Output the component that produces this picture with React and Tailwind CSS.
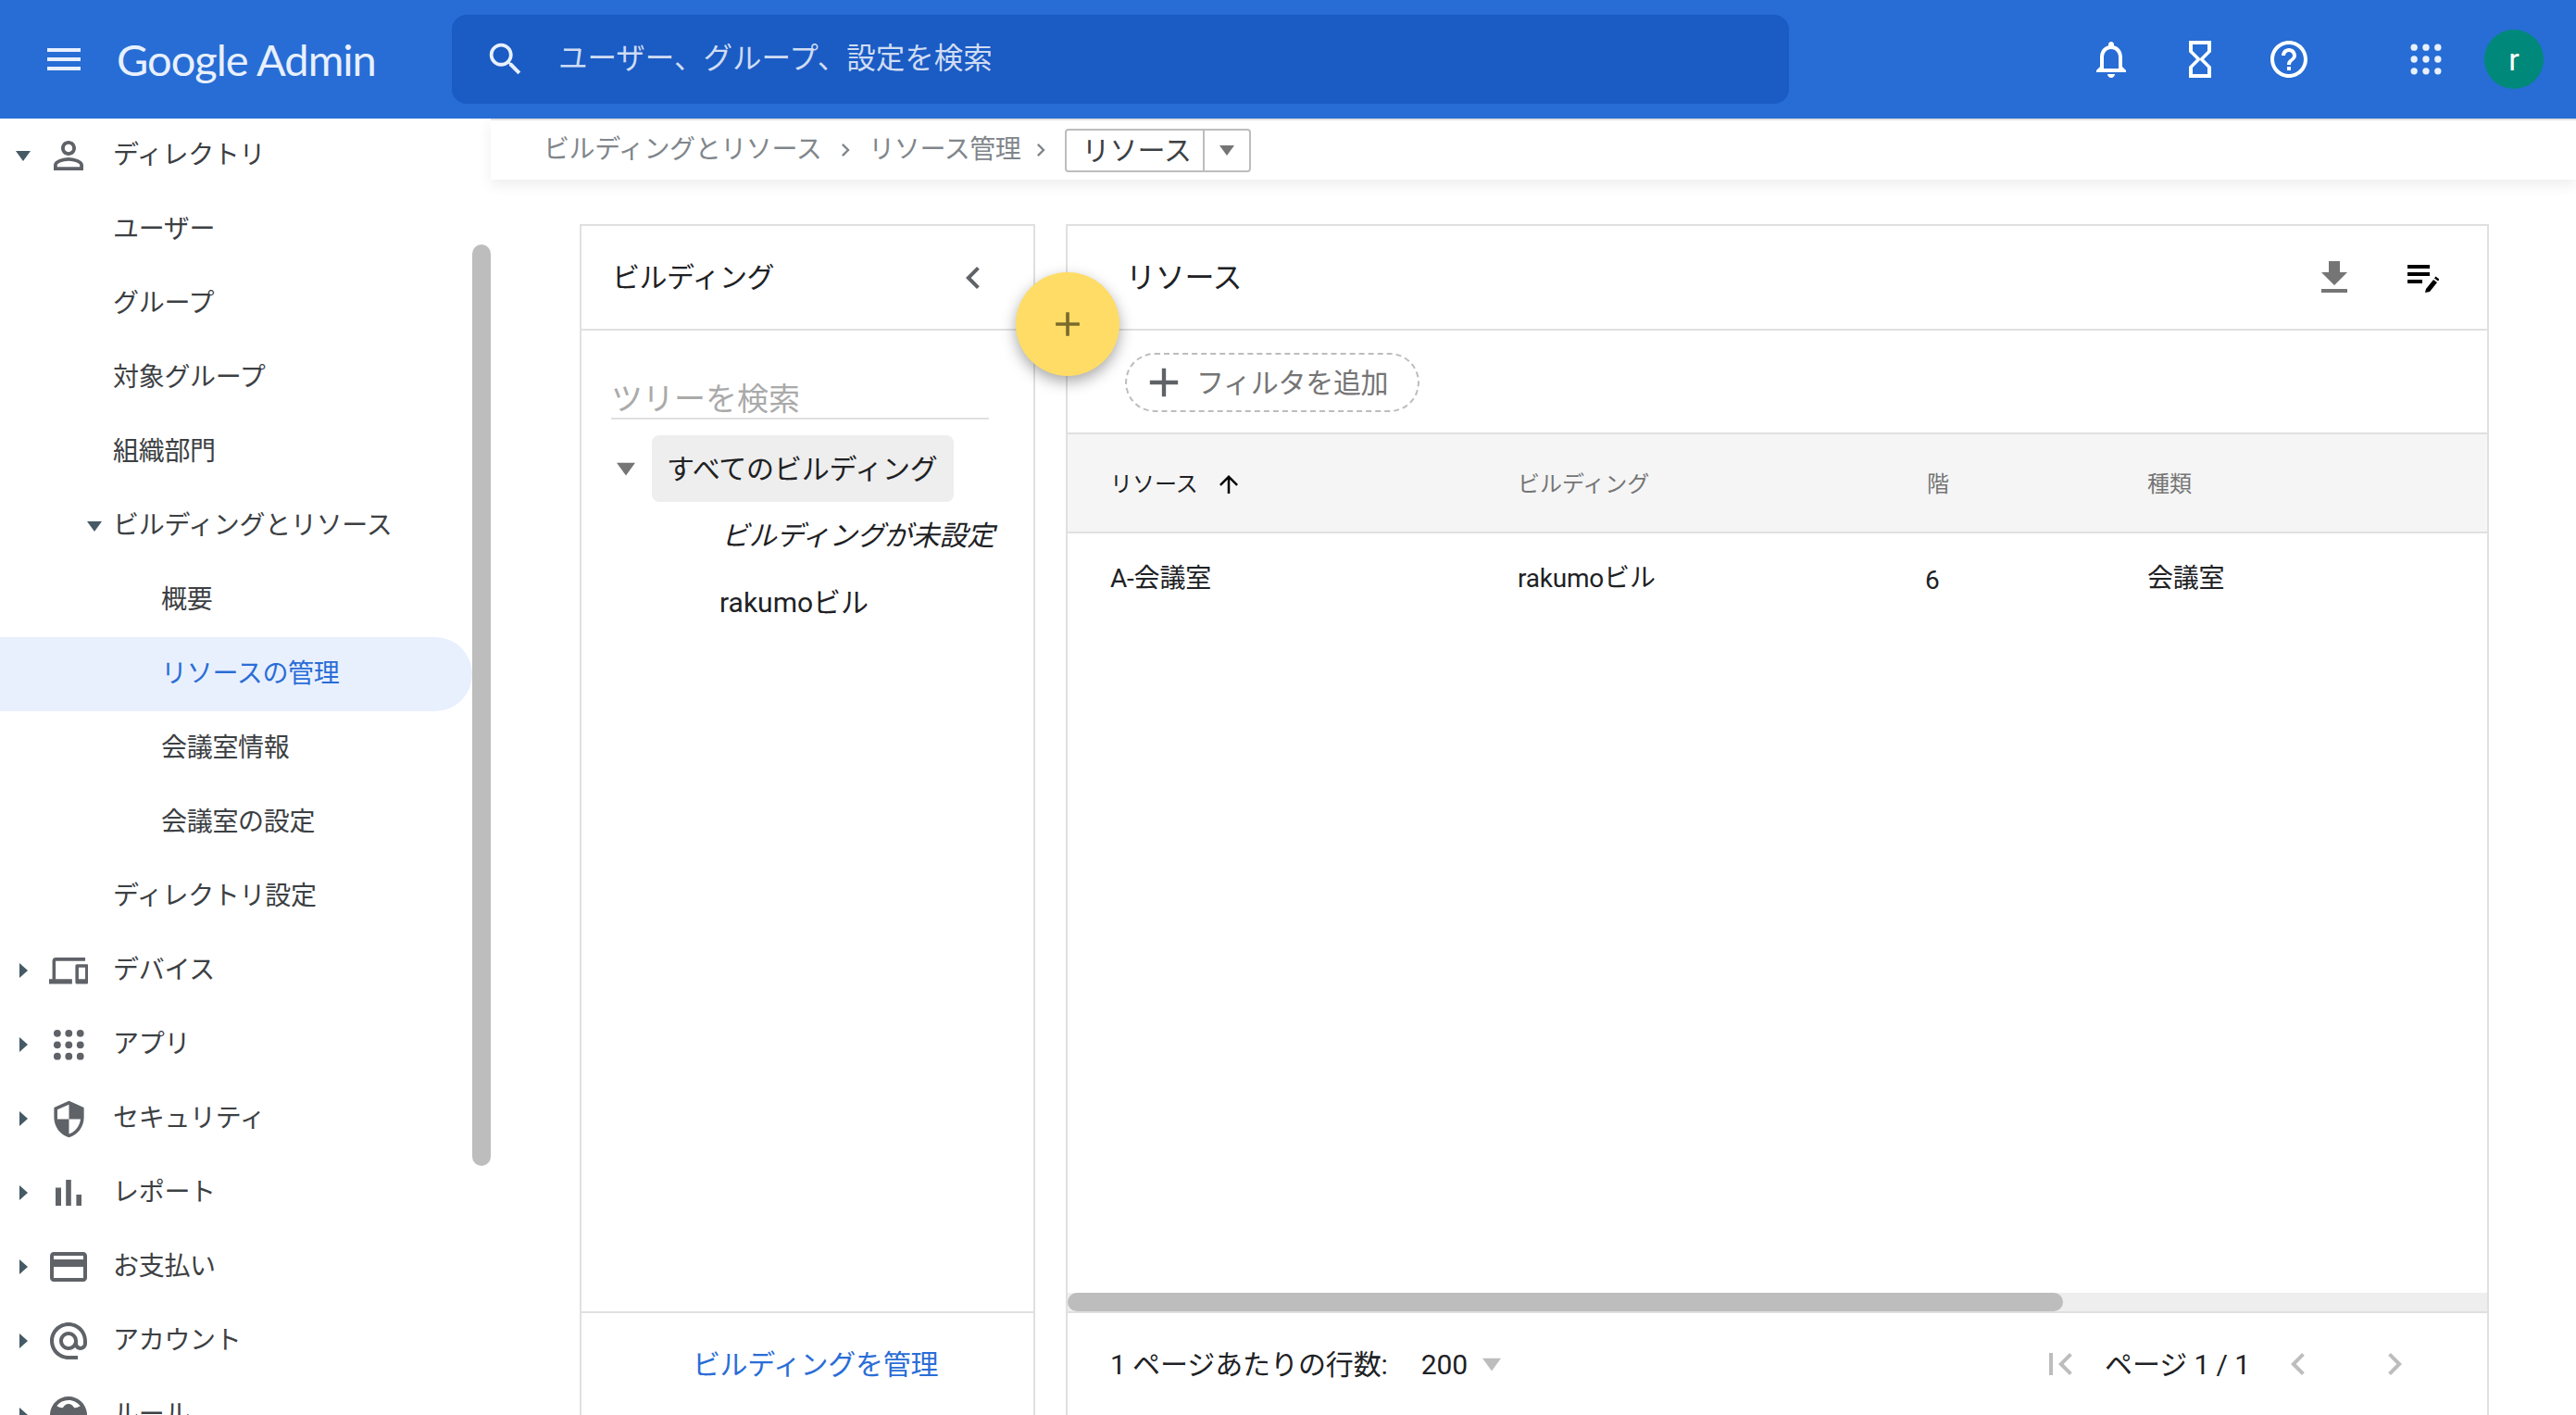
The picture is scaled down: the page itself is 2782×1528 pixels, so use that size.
const P = {
  person: "M12 5.9c1.16 0 2.1.94 2.1 2.1s-.94 2.1-2.1 2.1S9.9 9.16 9.9 8s.94-2.1 2.1-2.1m0 9c2.97 0 6.1 1.46 6.1 2.1v1.1H5.9V17c0-.64 3.13-2.1 6.1-2.1M12 4C9.79 4 8 5.79 8 8s1.79 4 4 4 4-1.79 4-4-1.79-4-4-4zm0 9c-2.67 0-8 1.34-8 4v3h16v-3c0-2.66-5.33-4-8-4z",
  devices: "M4 6h18V4H4c-1.1 0-2 .9-2 2v11H0v3h14v-3H4V6zm19 2h-6c-.55 0-1 .45-1 1v10c0 .55.45 1 1 1h6c.55 0 1-.45 1-1V9c0-.55-.45-1-1-1zm-1 9h-4v-7h4v7z",
  shield: "M12 1L3 5v6c0 5.55 3.84 10.74 9 12 5.16-1.26 9-6.45 9-12V5l-9-4zm0 10.99h7c-.53 4.12-3.28 7.79-7 8.94V12H5V6.3l7-3.11v8.8z",
  bars: "M5 9.2h3V19H5zM10.6 5h2.8v14h-2.8zm5.6 8H19v6h-2.8z",
  card: "M20 4H4c-1.11 0-1.99.89-1.99 2L2 18c0 1.11.89 2 2 2h16c1.11 0 2-.89 2-2V6c0-1.11-.89-2-2-2zm0 14H4v-6h16v6zm0-10H4V6h16v2z",
  at: "M12 2C6.48 2 2 6.48 2 12s4.48 10 10 10h5v-2h-5c-4.34 0-8-3.66-8-8s3.66-8 8-8 8 3.66 8 8v1.43c0 .79-.71 1.57-1.5 1.57s-1.5-.78-1.5-1.57V12c0-2.76-2.24-5-5-5s-5 2.24-5 5 2.24 5 5 5c1.38 0 2.64-.56 3.54-1.47.65.89 1.77 1.47 2.96 1.47 1.97 0 3.5-1.6 3.5-3.57V12c0-5.52-4.48-10-10-10zm0 13c-1.66 0-3-1.34-3-3s1.34-3 3-3 3 1.34 3 3-1.34 3-3 3z",
  rule: "M12 2C6.48 2 2 6.48 2 12s4.48 10 10 10 10-4.48 10-10S17.52 2 12 2zm0 2c2.6 0 4.9 1.24 6.37 3.16C17 8 15.5 8.3 15 8c-.8-1.3-1.8-2-3-2s-2.2.7-3 2c-.5.3-2 0-3.37-.84A7.98 7.98 0 0 1 12 4z",
  bell: "M12 22c1.1 0 2-.9 2-2h-4c0 1.1.9 2 2 2zm6-6v-5c0-3.07-1.63-5.64-4.5-6.32V4c0-.83-.67-1.5-1.5-1.5s-1.5.67-1.5 1.5v.68C7.64 5.36 6 7.92 6 11v5l-2 2v1h16v-1l-2-2zm-2 1H8v-6c0-2.48 1.51-4.5 4-4.5s4 2.02 4 4.5v6z",
  hourglass: "M6 2v6h.01L6 8.01 10 12l-4 4 .01.01H6V22h12v-5.99h-.01L18 16l-4-4 4-3.99-.01-.01H18V2H6zm10 14.5V20H8v-3.5l4-4 4 4zm-4-5l-4-4V4h8v3.5l-4 4z",
  help: "M11 18h2v-2h-2v2zm1-16C6.48 2 2 6.48 2 12s4.48 10 10 10 10-4.48 10-10S17.52 2 12 2zm0 18c-4.41 0-8-3.59-8-8s3.59-8 8-8 8 3.59 8 8-3.59 8-8 8zm0-14c-2.21 0-4 1.79-4 4h2c0-1.1.9-2 2-2s2 .9 2 2c0 2-3 1.75-3 5h2c0-2.25 3-2.5 3-5 0-2.21-1.79-4-4-4z",
  search: "M15.5 14h-.79l-.28-.27C15.41 12.59 16 11.11 16 9.5 16 5.91 13.09 3 9.5 3S3 5.91 3 9.5 5.91 16 9.5 16c1.61 0 3.09-.59 4.23-1.57l.27.28v.79l5 4.99L20.49 19l-4.99-5zm-6 0C7.01 14 5 11.99 5 9.5S7.01 5 9.5 5 14 7.01 14 9.5 11.99 14 9.5 14z",
  menu: "M3 18h18v-2H3v2zm0-5h18v-2H3v2zm0-7v2h18V6H3z",
  download: "M19 9h-4V3H9v6H5l7 7 7-7zM5 18v2h14v-2H5z",
  plus: "M19 13h-6v6h-2v-6H5v-2h6V5h2v6h6v2z",
  up: "M4 12l1.41 1.41L11 7.83V20h2V7.83l5.58 5.59L20 12l-8-8-8 8z",
  left: "M15.41 7.41L14 6l-6 6 6 6 1.41-1.41L10.83 12z",
  right: "M10 6L8.59 7.41 13.17 12l-4.58 4.59L10 18l6-6z",
  first: "M18.41 16.59L13.82 12l4.59-4.59L17 6l-6 6 6 6zM6 6h2v12H6z",
};

function Icon({ d, className }) {
  return (
    <svg viewBox="0 0 24 24" className={className} fill="currentColor">
      <path d={d} />
    </svg>
  );
}

function Dots({ className, r = 2 }) {
  const pts = [5, 12, 19];
  return (
    <svg viewBox="0 0 24 24" className={className} fill="currentColor">
      {pts.map((y) => pts.map((x) => <circle key={x + "-" + y} cx={x} cy={y} r={r} />))}
    </svg>
  );
}

function Tri({ dir, className }) {
  return (
    <svg viewBox="0 0 16 16" className={className} fill="currentColor">
      <path d={dir === "down" ? "M0 3h16L8 14z" : "M4 0l9 8-9 8z"} />
    </svg>
  );
}

function NavTop({ icon, label, open }) {
  return (
    <div className="flex h-[80px] items-center">
      <div className="flex w-[49px] justify-center">
        <Tri dir={open ? "down" : "right"} className="h-[16px] w-[16px] text-[#455a64]" />
      </div>
      <div className="flex w-[50px] justify-center">{icon}</div>
      <span className="ml-[23px]">{label}</span>
    </div>
  );
}

function NavSub({ label, deep, active, open }) {
  return (
    <div className={active ? "relative flex h-[80px] w-[510px] items-center rounded-r-full bg-[#e8f0fe] pl-[174px] text-[#2a6dd6]" : deep ? "relative flex h-[80px] items-center pl-[174px]" : "relative flex h-[80px] items-center pl-[122px]"}>
      {open && <Tri dir="down" className="mr-[10px] ml-[-30px] h-[16px] w-[20px] text-[#455a64]" />}
      {label}
    </div>
  );
}

const iconCls = "h-[48px] w-[48px] shrink-0 text-[#5f6368]";

export default function App() {
  return (
    <div className="relative flex h-[1528px] w-[2782px] flex-col overflow-hidden bg-white font-['Roboto','Noto_Sans_CJK_JP',sans-serif]">
      <header className="relative z-10 flex h-[128px] shrink-0 items-center bg-[#276dd5]">
        <Icon d={P.menu} className="ml-[45px] h-[48px] w-[48px] text-[#e8f0fe]" />
        <div className="ml-[33px] w-[282px] font-['Lato',sans-serif] text-[47px] leading-none tracking-[-1px] whitespace-nowrap text-[#e8f0fe]">Google Admin</div>
        <div className="ml-[80px] flex h-[96px] w-[1444px] items-center rounded-[16px] bg-[#1a5bc4]">
          <Icon d={P.search} className="ml-[35px] h-[46px] w-[46px] text-[#e8f0fe]" />
          <span className="ml-[34px] text-[31.5px] text-[#cfdcf3]">ユーザー、グループ、設定を検索</span>
        </div>
        <div className="ml-[324px] flex items-center">
          <Icon d={P.bell} className="h-[48px] w-[48px] text-white" />
          <Icon d={P.hourglass} className="ml-[48px] h-[48px] w-[48px] text-white" />
          <Icon d={P.help} className="ml-[48px] h-[48px] w-[48px] text-white" />
          <Dots className="ml-[102px] h-[44px] w-[44px] text-[#e8f0fe]" />
          <div className="ml-[41px] flex h-[64px] w-[64px] items-center justify-center rounded-full bg-[#00897b] text-[34px] text-white">r</div>
        </div>
      </header>

      <div className="flex min-h-0 flex-1">
        <aside className="relative w-[530px] shrink-0 overflow-hidden text-[28px] tracking-[-0.3px] text-[#3c4043]">
          <NavTop open label="ディレクトリ" icon={<Icon d={P.person} className={iconCls} />} />
          <NavSub label="ユーザー" />
          <NavSub label="グループ" />
          <NavSub label="対象グループ" />
          <NavSub label="組織部門" />
          <NavSub open label="ビルディングとリソース" />
          <NavSub deep label="概要" />
          <NavSub deep active label="リソースの管理" />
          <NavSub deep label="会議室情報" />
          <NavSub deep label="会議室の設定" />
          <NavSub label="ディレクトリ設定" />
          <NavTop label="デバイス" icon={<Icon d={P.devices} className="h-[42.6px] w-[42.6px] text-[#5f6368]" />} />
          <NavTop label="アプリ" icon={<Dots r={2.2} className="h-[42.6px] w-[42.6px] text-[#5f6368]" />} />
          <NavTop label="セキュリティ" icon={<Icon d={P.shield} className="h-[43px] w-[43px] text-[#5f6368]" />} />
          <NavTop label="レポート" icon={<Icon d={P.bars} className={iconCls} />} />
          <NavTop label="お支払い" icon={<Icon d={P.card} className={iconCls} />} />
          <NavTop label="アカウント" icon={<Icon d={P.at} className={iconCls} />} />
          <NavTop label="ルール" icon={<Icon d={P.rule} className={iconCls} />} />
          <div className="absolute top-[136px] left-[510px] h-[995px] w-[20px] rounded-full bg-[#bdbdbd]" />
        </aside>

        <main className="relative flex min-w-0 flex-1 flex-col">
          <div className="flex h-[66px] shrink-0 items-center border-t-2 border-[#e0e0e0] bg-white pl-[57px] text-[28px] tracking-[-0.4px] text-[#80868b] shadow-[0_6px_14px_rgba(0,0,0,0.07)]">
            <span>ビルディングとリソース</span>
            <Icon d={P.right} className="ml-[12px] h-[28px] w-[28px]" />
            <span className="ml-[11px]">リソース管理</span>
            <Icon d={P.right} className="ml-[8px] h-[28px] w-[28px]" />
            <div className="ml-[12px] flex h-[47px] w-[201px] items-center rounded-[4px] border-2 border-[#bdbdbd] text-[30px] tracking-normal text-[#3c4043]">
              <span className="w-[149px] border-r-2 border-[#bdbdbd] pl-[16px] leading-[43px]">リソース</span>
              <Tri dir="down" className="ml-[15px] h-[16px] w-[18px] text-[#757575]" />
            </div>
          </div>

          <div className="flex gap-[33px] pt-[48px] pl-[96px]">
            <section className="flex h-[1286px] w-[492px] shrink-0 flex-col border-x-2 border-t-2 border-[#e0e0e0]">
              <div className="flex h-[113px] shrink-0 items-center justify-between border-b-2 border-[#e0e0e0] pr-[41px] pl-[33px] text-[30px] text-[#202124]">
                <span className="tracking-[-0.5px]">ビルディング</span>
                <Icon d={P.left} className="h-[48px] w-[48px] text-[#5f6368]" />
              </div>
              <div className="ml-[32px] flex h-[96px] w-[408px] shrink-0 items-end border-b-2 border-[#e0e0e0] text-[34px] leading-[40px] text-[#aaaaaa]">ツリーを検索</div>
              <div className="mt-[17px] flex h-[72px] shrink-0 items-center">
                <Tri dir="down" className="ml-[38px] h-[20px] w-[20px] text-[#757575]" />
                <div className="ml-[18px] flex h-[72px] w-[326px] items-center rounded-[8px] bg-[#eeeeee] pl-[16px] text-[30px] tracking-[-0.2px] whitespace-nowrap text-[#202124]">すべてのビルディング</div>
              </div>
              <div className="flex h-[72px] shrink-0 items-center pl-[151px] text-[30px] tracking-[-0.3px] whitespace-nowrap text-[#202124] italic">ビルディングが未設定</div>
              <div className="flex h-[72px] shrink-0 items-center pl-[149px] text-[30px] text-[#202124]">rakumoビル</div>
              <div className="flex-1" />
              <div className="flex h-[112px] shrink-0 items-center justify-center border-t-2 border-[#e0e0e0] pl-[17px] text-[30px] tracking-[-0.3px] text-[#2a6dd6]">ビルディングを管理</div>
            </section>

            <section className="flex h-[1286px] w-[1537px] shrink-0 flex-col border-x-2 border-t-2 border-[#e0e0e0]">
              <div className="flex h-[113px] shrink-0 items-center border-b-2 border-[#e0e0e0] pl-[63px] text-[32px] tracking-[-0.3px] text-[#202124]">
                <span>リソース</span>
                <Icon d={P.download} className="ml-auto h-[48px] w-[48px] text-[#757575]" />
                <svg viewBox="0 0 36 32" className="mr-[52px] ml-[53px] h-[32px] w-[36px] text-black" fill="currentColor">
                  <rect x="2" y="2" width="24" height="4" />
                  <rect x="2" y="10" width="24" height="4" />
                  <rect x="2" y="18" width="16" height="4" />
                  <path d="M22 28l8-10 4 3-8 10-5 1zM31 16.5l1.5-2 4 3-1.5 2z" />
                </svg>
              </div>
              <div className="flex h-[112px] shrink-0 items-center border-b-2 border-[#e0e0e0] pl-[62px]">
                <div className="mt-[2px] flex h-[64px] w-[318px] items-center rounded-full border-2 border-dashed border-[#bdbdbd] pl-[14px] text-[30px] tracking-[-0.3px] text-[#757575]">
                  <Icon d={P.plus} className="h-[52px] w-[52px] text-[#5f6368]" />
                  <span className="ml-[9px]">フィルタを追加</span>
                </div>
              </div>
              <div className="grid h-[107px] shrink-0 grid-cols-[440px_442px_238px_1fr] items-center border-b-2 border-[#e0e0e0] bg-[#f5f5f5] pt-[2px] pl-[46px] text-[24px] text-[#757575]">
                <div className="flex items-center text-[#202124]">
                  <span>リソース</span>
                  <Icon d={P.up} className="ml-[18px] h-[30px] w-[30px] text-black" />
                </div>
                <div>ビルディング</div>
                <div>階</div>
                <div>種類</div>
              </div>
              <div className="grid h-[96px] shrink-0 grid-cols-[440px_442px_238px_1fr] items-center pt-[2px] pl-[46px] text-[28px] tracking-[-0.2px] text-[#202124]">
                <div>A-会議室</div>
                <div>rakumoビル</div>
                <div className="mt-[3px] ml-[-2px]">6</div>
                <div>会議室</div>
              </div>
              <div className="flex-1" />
              <div className="h-[22px] shrink-0 border-b-2 border-[#e0e0e0] bg-[#eeeeee]">
                <div className="h-[20px] w-[1075px] rounded-full bg-[#bdbdbd]" />
              </div>
              <div className="flex h-[110px] shrink-0 items-center pl-[46px] text-[30px] tracking-[-0.1px] text-[#202124]">
                <span>1 ページあたりの行数:</span>
                <span className="ml-[36px]">200</span>
                <Tri dir="down" className="ml-[14px] h-[20px] w-[24px] text-[#bdbdbd]" />
                <Icon d={P.first} className="ml-[578px] h-[48px] w-[48px] text-[#bdbdbd]" />
                <span className="ml-[24px]">ページ 1 / 1</span>
                <Icon d={P.left} className="ml-[28px] h-[48px] w-[48px] text-[#bdbdbd]" />
                <Icon d={P.right} className="ml-[56px] h-[48px] w-[48px] text-[#bdbdbd]" />
              </div>
            </section>
          </div>

          <div className="absolute top-[166px] left-[567px] flex h-[112px] w-[112px] items-center justify-center rounded-full bg-[#ffdc66] shadow-[0_6px_16px_rgba(0,0,0,0.35)]">
            <Icon d={P.plus} className="h-[44px] w-[44px] text-[#7a6a2c]" />
          </div>
        </main>
      </div>
    </div>
  );
}
